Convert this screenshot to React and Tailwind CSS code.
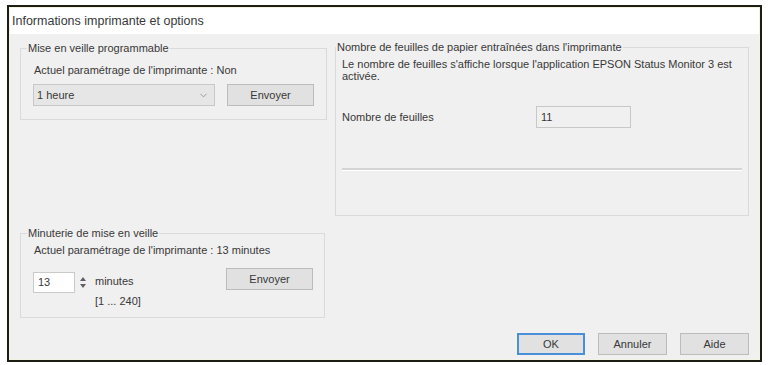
import { ChevronDown } from 'lucide-react'

const FONT = { fontFamily: '"Liberation Sans", Arial, sans-serif' }

function Button({ children, primary = false, className = '' }) {
  return (
    <button
      type="button"
      className={`h-[22px] bg-[#e1e1e1] text-[11px] text-[#383838] ${
        primary ? 'border-2 border-[#4a90d9]' : 'border border-[#bcbcbc]'
      } ${className}`}
    >
      {children}
    </button>
  )
}

function GroupBox({ title, className = '', children }) {
  return (
    <fieldset className={`border border-[#dadada] px-[12px] ${className}`}>
      <legend className="ml-[-6px] px-[1px] leading-[14px] text-[11px] text-[#383838]">{title}</legend>
      {children}
    </fieldset>
  )
}

export default function App() {
  return (
    <div className="w-[768px] h-[365px] bg-white pt-[5px] pl-[7px] overflow-hidden" style={FONT}>
      <div className="w-[755px] h-[357px] border-2 border-[#1d1d14]">
        <div className="h-full border border-[#f3f3e2] flex flex-col">
          {/* barre de titre */}
          <div className="h-[26px] bg-white flex items-center pl-[2px] text-[12.5px] text-[#383838]">
            Informations imprimante et options
          </div>

          <div className="flex-1 bg-[#f0f0f0] px-[10px] flex flex-col">
            <div className="flex items-start gap-[10px]">
              <div className="w-[305px] flex flex-col">
                <GroupBox title="Mise en veille programmable" className="mt-[7px] h-[79px]">
                  <div className="mt-[8px] leading-[14px] text-[11px] text-[#383838] pl-[1px]">
                    Actuel paramétrage de l&apos;imprimante : Non
                  </div>
                  <div className="mt-[7px] flex items-center">
                    <div className="w-[182px] h-[22px] bg-[#e6e6e6] border border-[#c8c8c8] flex items-center justify-between pl-[3px] pr-[5px] text-[11px] text-[#383838]">
                      <span>1 heure</span>
                      <ChevronDown size={11} strokeWidth={1.5} className="text-[#7a7a7a]" />
                    </div>
                    <Button className="ml-[12px] w-[87px]">Envoyer</Button>
                  </div>
                </GroupBox>

                <GroupBox title="Minuterie de mise en veille" className="mt-[106px] h-[92px]">
                  <div className="mt-[3px] leading-[14px] text-[11px] text-[#383838] pl-[1px]">
                    Actuel paramétrage de l&apos;imprimante : 13 minutes
                  </div>
                  <div className="mt-[11px] flex items-start">
                    <div className="mt-[4px] flex items-start">
                      <div className="w-[42px] h-[21px] bg-white border border-[#cacaca] flex items-center pl-[4px] text-[11px] text-[#383838]">
                        13
                      </div>
                      <div className="ml-[3px] w-[10px] h-[21px] flex flex-col items-center justify-center gap-[3px]">
                        <svg width="6" height="4" viewBox="0 0 6 4">
                          <path d="M3 0 L6 4 L0 4 Z" fill="#606060" />
                        </svg>
                        <svg width="6" height="4" viewBox="0 0 6 4">
                          <path d="M0 0 L6 0 L3 4 Z" fill="#606060" />
                        </svg>
                      </div>
                      <div className="ml-[7px] flex flex-col text-[11px] text-[#383838] leading-[14px]">
                        <span className="mt-[2px]">minutes</span>
                        <span className="mt-[6px]">[1 ... 240]</span>
                      </div>
                    </div>
                    <Button className="ml-auto mr-[-1px] w-[87px]">Envoyer</Button>
                  </div>
                </GroupBox>
              </div>

              <GroupBox
                title="Nombre de feuilles de papier entraînées dans l'imprimante"
                className="w-[414px] mt-[6px] h-[176px] !pl-[6px] !pr-[6px]"
              >
                <p className="mt-[4px] text-[11px] leading-[12px] text-[#383838]">
                  Le nombre de feuilles s&apos;affiche lorsque l&apos;application EPSON Status Monitor 3 est
                  <br />
                  activée.
                </p>
                <div className="mt-[24px] flex items-center h-[22px]">
                  <span className="w-[194px] text-[11px] text-[#383838]">Nombre de feuilles</span>
                  <div className="w-[95px] h-[22px] border border-[#c8c8c8] bg-[#f0f0f0] flex items-center pl-[4px] text-[11px] text-[#383838]">
                    11
                  </div>
                </div>
                <div className="mt-[40px] border-t-2 border-[#d4d4d4] border-b-white border-b" />
              </GroupBox>
            </div>

            <div className="mt-[15px] flex justify-end gap-[13px]">
              <Button primary className="w-[68px]">OK</Button>
              <Button className="w-[69px]">Annuler</Button>
              <Button className="w-[69px]">Aide</Button>
            </div>
          </div>
        </div>
      </div>
    </div>
  )
}
